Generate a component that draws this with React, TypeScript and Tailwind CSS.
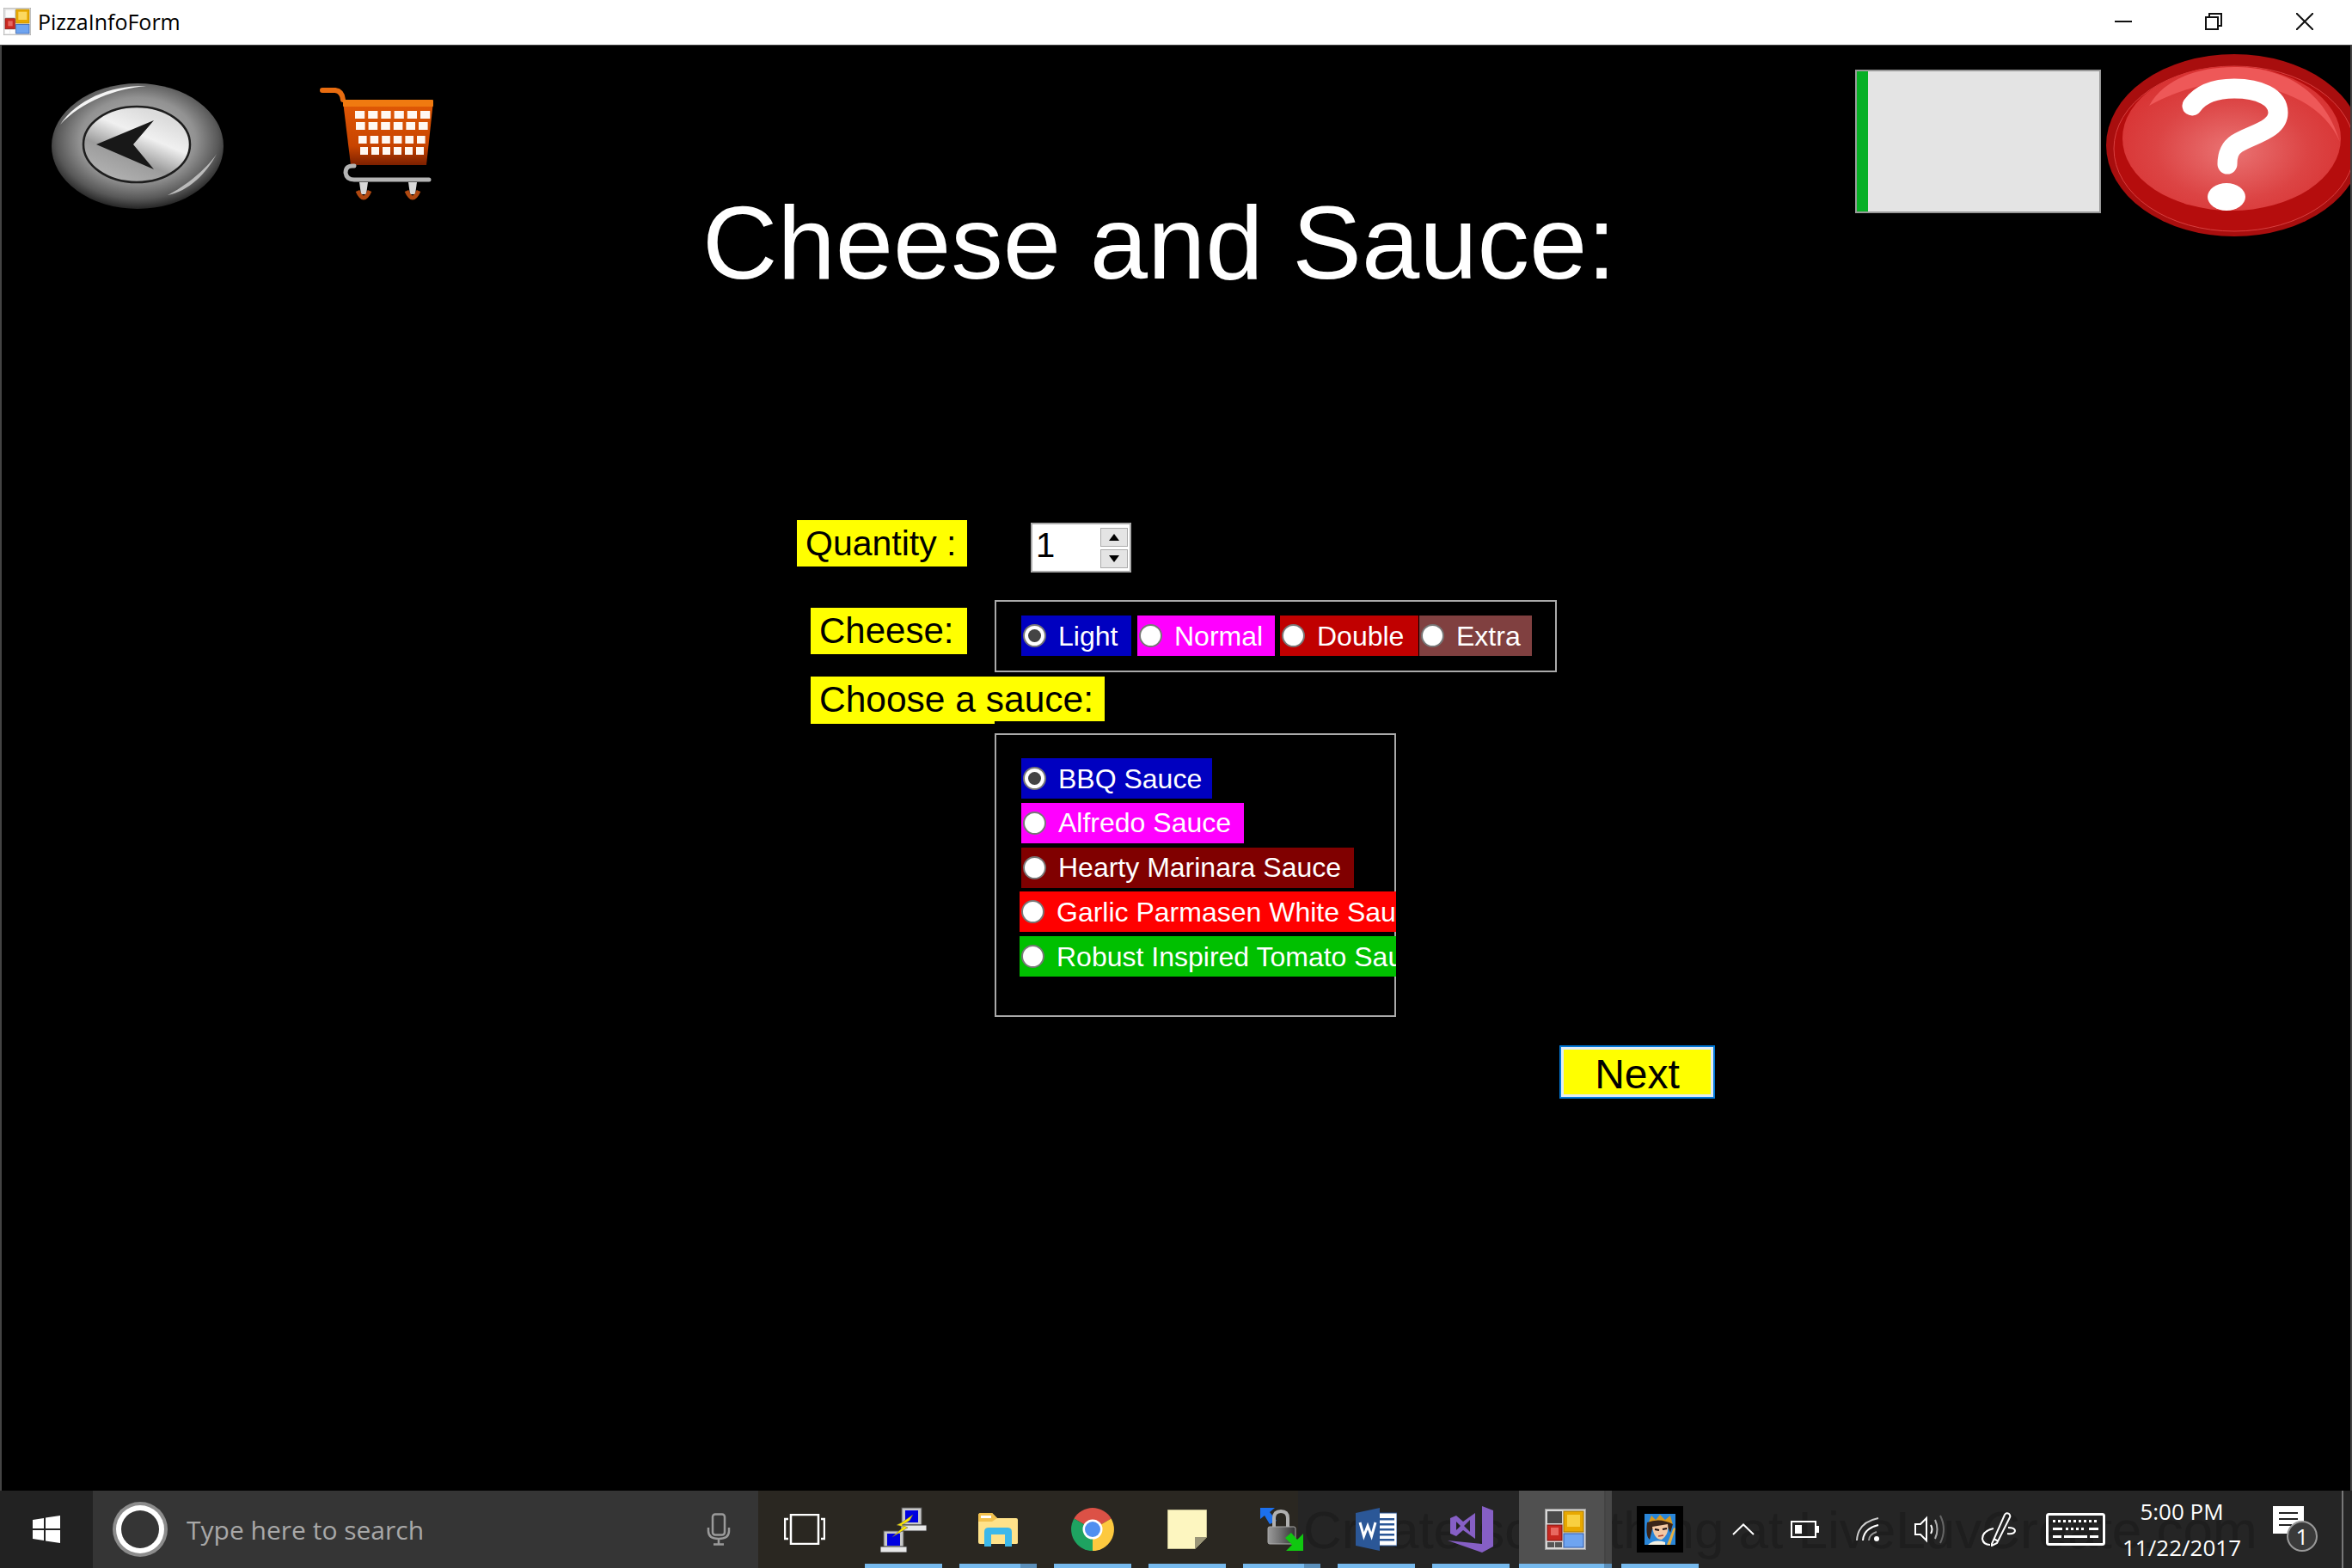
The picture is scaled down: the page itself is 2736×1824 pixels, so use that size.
import type { ReactNode } from 'react'
import { clsx } from 'clsx'

const SAUCES = [
  { label: 'BBQ Sauce', bg: 'bg-[#0000c0]', width: 'w-[222px]', checked: true },
  { label: 'Alfredo Sauce', bg: 'bg-[#ff00ff]', width: 'w-[259px]' },
  { label: 'Hearty Marinara Sauce', bg: 'bg-[#800000]', width: 'w-[387px]' },
  { label: 'Garlic Parmasen White Sauce', bg: 'bg-[#ff0000]', width: 'w-[438px] -ml-[2px] -mr-[2px]' },
  { label: 'Robust Inspired Tomato Sauce', bg: 'bg-[#00c000]', width: 'w-[438px] -ml-[2px] -mr-[2px]' },
]

const CHEESES = [
  { label: 'Light', bg: 'bg-[#0000c0]', width: 'w-[128px]', checked: true },
  { label: 'Normal', bg: 'bg-[#ff00ff]', width: 'w-[160px] ml-[7px]' },
  { label: 'Double', bg: 'bg-[#c00000]', width: 'w-[161px] ml-[6px]' },
  { label: 'Extra', bg: 'bg-[#804040]', width: 'w-[131px] ml-[1px]' },
]

function Radio({ label, bg, width, checked }: { label: string; bg: string; width: string; checked?: boolean }) {
  return (
    <div className={clsx('flex h-[47px] shrink-0 items-center overflow-hidden whitespace-nowrap pl-[2px] text-[32px] leading-none text-white', bg, width)}>
      <span className="flex h-[27px] w-[27px] shrink-0 items-center justify-center rounded-full border-2 border-[#777] bg-white">
        {checked && <span className="h-[15px] w-[15px] rounded-full bg-[#444]" />}
      </span>
      <span className="ml-[14px]">{label}</span>
    </div>
  )
}

function AppIcon({ size = 48 }: { size?: number }) {
  return (
    <svg width={size} height={size} viewBox="0 0 48 48">
      <rect x="0.5" y="0.5" width="47" height="47" fill="#d8d8d8" stroke="#999" />
      <rect x="3" y="3" width="17" height="14" fill="#4a4a4a" />
      <rect x="22" y="3" width="23" height="24" fill="#e8a800" stroke="#a87800" />
      <rect x="26" y="7" width="15" height="14" fill="#f8d040" />
      <rect x="3" y="19" width="17" height="18" fill="#c82820" stroke="#801410" />
      <rect x="7" y="22" width="9" height="9" fill="#e86860" />
      <rect x="22" y="29" width="23" height="16" fill="#6ea4f0" stroke="#2c58a8" />
      <rect x="3" y="39" width="8" height="6" fill="#555" />
      <rect x="12" y="39" width="8" height="6" fill="#555" />
    </svg>
  )
}

function TitleAppIcon() {
  return (
    <svg width="32" height="32" viewBox="0 0 48 48">
      <rect x="0.5" y="0.5" width="47" height="47" fill="#e8e8e8" stroke="#aaa" />
      <rect x="3" y="3" width="17" height="14" fill="#fafafa" stroke="#ccc" />
      <rect x="22" y="3" width="23" height="24" fill="#e8a800" stroke="#b88800" />
      <rect x="26" y="7" width="15" height="14" fill="#fbd860" />
      <rect x="3" y="19" width="17" height="18" fill="#c82820" stroke="#801410" />
      <rect x="8" y="23" width="8" height="9" fill="#e86860" />
      <rect x="22" y="29" width="23" height="16" fill="#6ea4f0" stroke="#2c58a8" />
      <rect x="3" y="39" width="8" height="6" fill="#fff" />
      <rect x="12" y="39" width="8" height="6" fill="#fff" />
    </svg>
  )
}

function BackButton() {
  return (
    <svg width="200" height="146" viewBox="0 0 200 146" className="block">
      <defs>
        <radialGradient id="backOuter" cx="50%" cy="45%" r="56%">
          <stop offset="0%" stopColor="#c0c0c0" />
          <stop offset="60%" stopColor="#929292" />
          <stop offset="84%" stopColor="#585858" />
          <stop offset="100%" stopColor="#1e1e1e" />
        </radialGradient>
        <linearGradient id="backInner" x1="0.75" y1="0.15" x2="0.25" y2="1">
          <stop offset="0%" stopColor="#dcdcdc" />
          <stop offset="30%" stopColor="#f0f0f0" />
          <stop offset="62%" stopColor="#9c9c9c" />
          <stop offset="100%" stopColor="#b4b4b4" />
        </linearGradient>
      </defs>
      <ellipse cx="100" cy="73" rx="100" ry="73" fill="url(#backOuter)" />
      <path d="M10 48 C30 18 70 2 110 3 C75 6 35 21 10 48Z" fill="#f4f4f4" />
      <path d="M135 130 C155 120 180 100 192 82 C180 105 160 125 135 130Z" fill="#bbb" />
      <ellipse cx="99" cy="71" rx="62" ry="44" fill="url(#backInner)" stroke="#1e1e1e" strokeWidth="2.5" />
      <polygon points="52,71 119,43 95,71 119,100" fill="#181818" />
    </svg>
  )
}

function CartIcon() {
  const rows = [
    { y: 29, x0: 41, step: 15.2 },
    { y: 42, x0: 42, step: 14.6 },
    { y: 58, x0: 45, step: 13.6 },
    { y: 71, x0: 47, step: 13 },
  ]
  return (
    <svg width="133" height="135" viewBox="0 0 133 135" className="block">
      <defs>
        <linearGradient id="cartBody" x1="0" y1="0" x2="0" y2="1">
          <stop offset="0%" stopColor="#e25a06" />
          <stop offset="70%" stopColor="#c84400" />
          <stop offset="100%" stopColor="#7c2000" />
        </linearGradient>
      </defs>
      <path d="M3 5 H18 Q26 6 27 16" fill="none" stroke="#e86c10" strokeWidth="6" strokeLinecap="round" />
      <polygon points="27,18 132,18 124,92 36,92" fill="url(#cartBody)" />
      <rect x="27" y="16" width="105" height="8" rx="1" fill="#f07a10" />
      {rows.map((row) =>
        [0, 1, 2, 3, 4, 5].map((i) => (
          <rect key={`${row.y}-${i}`} x={row.x0 + i * row.step} y={row.y} width={row.step - 4} height="9" fill="#fff8f2" />
        )),
      )}
      <path d="M40 93 Q30 92 30 101 Q31 109 40 109 H127" fill="none" stroke="#b4b4b4" strokeWidth="5" strokeLinecap="round" />
      <path d="M46 112 H56 L54 126 H48Z" fill="#d8d8d8" />
      <path d="M103 112 H113 L111 126 H105Z" fill="#d8d8d8" />
      <path d="M44 122 Q51 138 58 122" fill="none" stroke="#b04810" strokeWidth="5" />
      <path d="M101 122 Q108 138 115 122" fill="none" stroke="#b04810" strokeWidth="5" />
    </svg>
  )
}

function HelpButton() {
  return (
    <svg width="284" height="212" viewBox="0 0 284 212" className="block shrink-0">
      <defs>
        <radialGradient id="helpBody" cx="50%" cy="58%" r="58%">
          <stop offset="0%" stopColor="#ea7474" />
          <stop offset="60%" stopColor="#dc4444" />
          <stop offset="100%" stopColor="#d83232" />
        </radialGradient>
      </defs>
      <ellipse cx="149" cy="106" rx="149" ry="106" fill="#a80e0e" />
      <ellipse cx="149" cy="110" rx="140" ry="96" fill="#b50d0d" stroke="#d84040" strokeWidth="1" />
      <ellipse cx="146" cy="98" rx="127" ry="84" fill="url(#helpBody)" />
      <path d="M50 60 C68 28 108 15 149 15 C200 15 252 36 272 102 C255 62 210 38 150 34 C110 32 75 46 50 60Z" fill="#ee5858" />
      <path d="M100 60 C110 46 126 40 149 40 C178 40 200 50 200 68 C200 88 170 93 152 104 C143 110 141 118 141 128" fill="none" stroke="#fff" strokeWidth="23" strokeLinecap="round" />
      <ellipse cx="140" cy="166" rx="22" ry="16" fill="#fff" />
    </svg>
  )
}

function PuttyIcon() {
  return (
    <svg width="54" height="54" viewBox="0 0 54 54">
      <rect x="25" y="2" width="23" height="20" fill="#c8c8c8" stroke="#555" />
      <rect x="29" y="5" width="15" height="14" fill="#0000e0" />
      <rect x="24" y="22" width="30" height="7" fill="#e8e8e8" stroke="#333" />
      <rect x="4" y="29" width="23" height="20" fill="#c8c8c8" stroke="#555" />
      <rect x="8" y="32" width="15" height="14" fill="#0000e0" />
      <rect x="0" y="47" width="31" height="7" fill="#e8e8e8" stroke="#333" />
      <polygon points="38,10 25,19 19,22 27,24 14,36 32,25 25,22 34,17" fill="#ffe800" stroke="#555" strokeWidth="0.5" />
    </svg>
  )
}

function FolderIcon() {
  return (
    <svg width="48" height="40" viewBox="0 0 48 40">
      <path d="M1 4 Q1 1 4 1 H17 L23 7 H45 Q47 7 47 9 V36 Q47 37 45 37 H3 Q1 37 1 35Z" fill="#ffe28a" />
      <path d="M1 4 Q1 1 4 1 H17 L23 7 L17 11 H1Z" fill="#f2c14e" />
      <rect x="4" y="4" width="12" height="3" fill="#fff" />
      <path d="M8 40 V23 Q8 18 13 18 H35 Q40 18 40 23 V40 H32 V26 H16 V40Z" fill="#3cb8ea" />
    </svg>
  )
}

function ChromeIcon() {
  return (
    <svg width="50" height="50" viewBox="0 0 50 50">
      <path d="M25 25 L3.4 12.5 A25 25 0 0 1 46.6 12.5Z" fill="#dc5146" />
      <path d="M25 25 L46.6 12.5 A25 25 0 0 1 25 50Z" fill="#fdc93f" />
      <path d="M25 25 L25 50 A25 25 0 0 1 3.4 12.5Z" fill="#1ea361" />
      <circle cx="25" cy="25" r="11.5" fill="#fff" />
      <circle cx="25" cy="25" r="9" fill="#4f8ff0" />
    </svg>
  )
}

function StickyIcon() {
  return (
    <svg width="46" height="46" viewBox="0 0 46 46">
      <path d="M0 0 H46 V32 L32 46 H0Z" fill="#fdf6c0" stroke="#8f8a68" strokeWidth="1" />
      <path d="M46 32 H32 V46Z" fill="#9a9578" />
    </svg>
  )
}

function LockIcon() {
  return (
    <svg width="52" height="52" viewBox="0 0 52 52">
      <defs>
        <linearGradient id="lockBody" x1="0" y1="0" x2="1" y2="0">
          <stop offset="0%" stopColor="#9a9a9a" />
          <stop offset="50%" stopColor="#6a6a6a" />
          <stop offset="100%" stopColor="#333" />
        </linearGradient>
      </defs>
      <polygon points="1,1 18,1 12,6 20,16 12,20 6,10 1,14" fill="#1c70ee" />
      <path d="M17 26 V13 Q17 5 25 5 Q33 5 33 13 V26" fill="none" stroke="#b0b0b0" strokeWidth="4" />
      <rect x="10" y="23" width="32" height="20" rx="2" fill="url(#lockBody)" stroke="#aaa" />
      <polygon points="51,31 51,51 31,51 38,44 30,36 37,30 44,38" fill="#10c810" />
    </svg>
  )
}

function WordIcon() {
  return (
    <svg width="48" height="50" viewBox="0 0 48 50">
      <rect x="24" y="6" width="24" height="38" fill="#fff" stroke="#2b5797" />
      <rect x="28" y="12" width="17" height="2.5" fill="#2b5797" />
      <rect x="28" y="18" width="17" height="2.5" fill="#2b5797" />
      <rect x="28" y="24" width="17" height="2.5" fill="#2b5797" />
      <rect x="28" y="30" width="17" height="2.5" fill="#2b5797" />
      <rect x="28" y="36" width="17" height="2.5" fill="#2b5797" />
      <polygon points="0,6 28,0 28,50 0,44" fill="#2b5797" />
      <path d="M5 17 L9.5 33 L14 21 L18.5 33 L23 17" fill="none" stroke="#fff" strokeWidth="3" />
    </svg>
  )
}

function VisualStudioIcon() {
  return (
    <svg width="54" height="54" viewBox="0 0 54 54">
      <path d="M40 0 L53 5 V47 L40 54 L0 40 L40 44Z" fill="#865fc5" />
      <path d="M3 14 L10 11 L18 18 L32 8 V38 L18 28 L10 35 L3 32Z M10 18 V28 L15 23Z M26 16 L19 23 L26 30Z" fill="#865fc5" fillRule="evenodd" />
    </svg>
  )
}

function Portrait() {
  return (
    <div className="flex h-[54px] w-[54px] items-center justify-center bg-black">
      <svg width="36" height="36" viewBox="0 0 36 36">
        <rect width="36" height="36" fill="#2a86d8" />
        <path d="M4 12 L8 2 L13 7 L18 1 L24 7 L30 2 L33 13Z" fill="#d99a20" />
        <path d="M3 10 Q1 26 6 30 L9 18 L26 13 L30 22 L33 12 Q18 4 3 10Z" fill="#3a2418" />
        <path d="M9 15 L27 12 Q29 24 20 30 Q11 30 9 15Z" fill="#f3c8a4" />
        <path d="M12 18 L17 19 M21 18 L26 17" stroke="#201010" strokeWidth="2" />
        <path d="M16 26 L22 25" stroke="#b04030" strokeWidth="1.5" />
        <path d="M26 36 L34 16 L36 17 L30 36Z" fill="#e8b040" />
        <path d="M4 36 Q12 29 24 33 V36Z" fill="#f4f0e0" />
      </svg>
    </div>
  )
}

const TASK_SLOTS: { id: string; icon: ReactNode; stacked?: boolean }[] = [
  { id: 'putty', icon: <PuttyIcon /> },
  { id: 'explorer', icon: <FolderIcon />, stacked: true },
  { id: 'chrome', icon: <ChromeIcon /> },
  { id: 'sticky', icon: <StickyIcon /> },
  { id: 'vpn', icon: <LockIcon />, stacked: true },
  { id: 'word', icon: <WordIcon /> },
  { id: 'vs', icon: <VisualStudioIcon /> },
]

function TaskSlot({ icon, stacked }: { icon: ReactNode; stacked?: boolean }) {
  return (
    <div className="relative flex h-full w-[110px] shrink-0 items-center justify-center">
      {icon}
      <span className="absolute bottom-0 left-[10px] h-[5px] w-[90px] bg-[#76b9ed]" />
      {stacked && <span className="absolute bottom-0 left-[81px] h-[5px] w-[19px] bg-[#5b8fba]" />}
    </div>
  )
}

function Taskbar() {
  return (
    <div className="relative flex h-[90px] shrink-0 overflow-hidden bg-[#252525] font-['Open_Sans',sans-serif]">
      <div className="flex w-[108px] shrink-0 items-center justify-center bg-[#222]">
        <svg width="32" height="32" viewBox="0 0 32 32" fill="#fff">
          <polygon points="0,5 13,3 13,15 0,15" />
          <polygon points="15,2.5 32,0 32,15 15,15" />
          <polygon points="0,17 13,17 13,29 0,27" />
          <polygon points="15,17 32,17 32,32 15,29.5" />
        </svg>
      </div>
      <div className="flex w-[774px] shrink-0 items-center bg-[#353535] pl-[23px]">
        <span className="flex h-[64px] w-[64px] shrink-0 items-center justify-center rounded-full bg-[#8c8c8c]">
          <span className="flex h-[56px] w-[56px] items-center justify-center rounded-full bg-white">
            <span className="h-[44px] w-[44px] rounded-full bg-[#353535]" />
          </span>
        </span>
        <span className="ml-[22px] text-[30px] text-[#a8a8a8]">Type here to search</span>
        <svg width="28" height="38" viewBox="0 0 28 38" fill="none" stroke="#9a9a9a" strokeWidth="2.5" className="ml-auto mr-[32px]">
          <rect x="7" y="1.5" width="14" height="24" rx="3" />
          <path d="M2 17 V21 Q2 30 14 30 Q26 30 26 21 V17 M14 30 V36 M8 36.5 H20" />
        </svg>
      </div>
      <div className="flex min-w-0 flex-1 bg-[linear-gradient(90deg,#2a2721_628px,#252525_628px)]">
        <div className="flex w-[114px] shrink-0 items-center justify-center pr-[6px]">
          <svg width="48" height="36" viewBox="0 0 48 36" fill="none" stroke="#fff" strokeWidth="2.5">
            <rect x="8" y="1" width="32" height="34" />
            <path d="M5 6 H1 V29 H5 M43 6 H47 V29 H43" />
          </svg>
        </div>
        {TASK_SLOTS.map((slot) => (
          <div key={slot.id} className="relative z-10">
            <TaskSlot icon={slot.icon} stacked={slot.stacked} />
          </div>
        ))}
        <div className="relative z-10 ml-px flex h-full w-[108px] shrink-0 items-center justify-center bg-[#505050]">
          <AppIcon />
          <span className="absolute inset-y-0 right-0 w-[9px] border-l-2 border-[#444] bg-[#484848]" />
          <span className="absolute bottom-0 left-0 h-[5px] w-[99px] bg-[#76b9ed]" />
          <span className="absolute bottom-0 right-0 h-[5px] w-[9px] bg-[#5b8fba]" />
        </div>
        <div className="relative z-10 ml-px">
          <TaskSlot icon={<Portrait />} />
        </div>
        <div className="relative z-10 ml-[6px] flex h-full items-center">
          <div className="flex w-[72px] justify-center">
            <svg width="26" height="14" viewBox="0 0 26 14" fill="none" stroke="#fff" strokeWidth="2">
              <path d="M1 13 L13 1.5 L25 13" />
            </svg>
          </div>
          <div className="flex w-[72px] justify-center">
            <svg width="34" height="20" viewBox="0 0 34 20">
              <rect x="1" y="1" width="28" height="18" fill="none" stroke="#fff" strokeWidth="2" />
              <rect x="5" y="5" width="8" height="10" fill="#fff" />
              <rect x="30" y="6" width="3" height="8" fill="#fff" />
            </svg>
          </div>
          <div className="flex w-[73px] justify-center">
            <svg width="28" height="28" viewBox="0 0 28 28" fill="none" stroke="#fff" strokeWidth="2">
              <path d="M1 27 Q2 6 26 1" stroke="#ccc" />
              <path d="M8 27 Q9 13 26 9" />
              <path d="M15 27 Q15 20 24 17" stroke="#999" />
              <circle cx="24" cy="25" r="3" fill="#fff" stroke="none" />
            </svg>
          </div>
          <div className="flex w-[72px] justify-center">
            <svg width="36" height="34" viewBox="0 0 36 34" fill="none" stroke="#fff" strokeWidth="2">
              <path d="M1 11 H7 L14 4 V30 L7 23 H1Z" />
              <path d="M19 12 Q22 17 19 22" />
              <path d="M24 6 Q29 17 24 28" stroke="#aaa" />
              <path d="M30 1 Q38 17 30 33" stroke="#666" />
            </svg>
          </div>
          <div className="flex w-[88px] justify-center">
            <svg width="40" height="40" viewBox="0 0 40 40" fill="none" stroke="#fff" strokeWidth="2">
              <path d="M12 37 L27 3 Q29 0 32 2 Q34 4 33 6 L18 36 L12 39Z M14 31 L20 34" />
              <path d="M31 18 Q39 18 39 22 Q38 26 30 25 M14 19 Q1 22 1 31 Q2 38 10 38" />
            </svg>
          </div>
          <div className="flex w-[90px] justify-center">
            <svg width="69" height="38" viewBox="0 0 69 38" fill="#fff">
              <rect x="1.5" y="1.5" width="66" height="35" rx="2" fill="none" stroke="#fff" strokeWidth="3" />
              {[0, 1, 2, 3, 4, 5, 6, 7, 8].map((i) => (
                <rect key={i} x={8 + i * 6} y="8" width="3" height="3" />
              ))}
              <rect x="8" y="17" width="11" height="3" />
              {[0, 1, 2, 3].map((i) => (
                <rect key={i} x={23 + i * 6} y="17" width="3" height="3" />
              ))}
              <rect x="50" y="17" width="11" height="3" />
              <rect x="8" y="26" width="10" height="3" />
              <rect x="21" y="26" width="27" height="3" />
              <rect x="51" y="26" width="10" height="3" />
            </svg>
          </div>
          <div className="flex w-[158px] flex-col items-center text-[26px] leading-[42px] text-white">
            <span>5:00 PM</span>
            <span>11/22/2017</span>
          </div>
          <div className="flex h-[90px] w-[109px] items-center border-r-2 border-[#777] pl-[27px]">
            <div className="relative h-[54px] w-[54px]">
              <svg width="36" height="32" viewBox="0 0 36 32">
                <path d="M0 0 H36 V32 H17 L13 32 H0Z" fill="#fff" />
                <path d="M7 8 H29 M7 15 H29 M7 22 H22" stroke="#222" strokeWidth="2" />
              </svg>
              <span className="absolute left-[16px] top-[17px] flex h-[36px] w-[36px] items-center justify-center rounded-full border-2 border-[#999] bg-[#3a3a3a] text-[26px] leading-none text-white">
                1
              </span>
            </div>
          </div>
        </div>
      </div>
      {/* watermark burnt into the capture, sits under the taskbar icons */}
      <span className="pointer-events-none absolute left-[1516px] top-[6px] whitespace-nowrap font-['Liberation_Sans',sans-serif] text-[62px] leading-[80px] text-[#1e1e1e]">
        Create something at LiveLuvCreate.com
      </span>
    </div>
  )
}

export default function App() {
  return (
    <div className="flex h-[1824px] w-[2736px] flex-col overflow-hidden bg-black font-['Liberation_Sans',sans-serif]">
      <div className="flex h-[53px] shrink-0 items-center border-b border-[#444] bg-white pb-[2px] pl-[4px]">
        <TitleAppIcon />
        <span className="ml-[8px] mt-[2px] font-['Open_Sans',sans-serif] text-[25px] text-black">PizzaInfoForm</span>
        <div className="ml-auto flex items-center">
          <svg width="20" height="20" viewBox="0 0 20 20" className="mr-[85px]" stroke="#111" strokeWidth="2">
            <path d="M0 10 H20" />
          </svg>
          <svg width="20" height="20" viewBox="0 0 20 20" className="mr-[86px]" fill="none" stroke="#111" strokeWidth="2">
            <rect x="1" y="5" width="14" height="14" />
            <path d="M5 5 V1 H19 V15 H15" />
          </svg>
          <svg width="20" height="20" viewBox="0 0 20 20" className="mr-[45px]" stroke="#111" strokeWidth="2">
            <path d="M0 0 L20 20 M20 0 L0 20" />
          </svg>
        </div>
      </div>

      <div className="min-h-0 flex-1 overflow-hidden border-x-2 border-[#444]">
        <div className="flex items-start">
          <div className="ml-[58px] mt-[44px]">
            <BackButton />
          </div>
          <div className="ml-[112px] mt-[47px]">
            <CartIcon />
          </div>
          <h1 className="ml-[312px] mt-[169px] whitespace-nowrap text-[121px] font-normal leading-none text-white">
            Cheese and Sauce:
          </h1>
          <div className="ml-auto mt-[28px] h-[167px] w-[286px] border-2 border-[#999] bg-[#e4e4e4]">
            <div className="h-full w-[13px] bg-[#06b025]" />
          </div>
          <div className="ml-[6px] mt-[10px]">
            <HelpButton />
          </div>
        </div>

        <div className="ml-[925px] mt-[262px] flex items-start">
          <div className="flex h-[54px] w-[198px] items-center bg-[#ffff00] pl-[10px] text-[41px] leading-none text-black">
            Quantity :
          </div>
          <div className="ml-[74px] mt-[3px] flex h-[58px] w-[117px] items-center border-2 border-[#aaa] bg-white pl-[4px]">
            <span className="pb-[7px] text-[40px] leading-none text-black">1</span>
            <div className="ml-auto mr-[2px] flex flex-col gap-[3px]">
              <span className="flex h-[22px] w-[32px] items-center justify-center border border-[#ababab] bg-[#e4e4e4]">
                <span className="h-0 w-0 border-x-[6px] border-b-[8px] border-x-transparent border-b-black" />
              </span>
              <span className="flex h-[22px] w-[32px] items-center justify-center border border-[#ababab] bg-[#e4e4e4]">
                <span className="h-0 w-0 border-x-[6px] border-t-[8px] border-x-transparent border-t-black" />
              </span>
            </div>
          </div>
        </div>

        <div className="ml-[941px] mt-[32px] flex items-start">
          <div className="mt-[9px] flex h-[54px] w-[182px] items-center bg-[#ffff00] pl-[10px] text-[42px] leading-none text-black">
            Cheese:
          </div>
          <div className="ml-[32px] flex h-[84px] w-[654px] items-start border-2 border-[#aaa] pl-[29px] pt-[16px]">
            {CHEESES.map((cheese) => (
              <Radio key={cheese.label} {...cheese} />
            ))}
          </div>
        </div>

        <div className="relative ml-[941px] mt-[5px] flex h-[52px] w-[342px] items-center whitespace-nowrap bg-[#ffff00] pl-[10px] pt-[3px] text-[42.5px] leading-none text-black after:absolute after:left-0 after:top-full after:h-[3px] after:w-[214px] after:bg-[#ffff00]">
          Choose a sauce:
        </div>

        <div className="ml-[1155px] mt-[14px] flex h-[330px] w-[467px] flex-col gap-[4.75px] border-2 border-[#aaa] pl-[29px] pt-[27px]">
          {SAUCES.map((sauce) => (
            <Radio key={sauce.label} {...sauce} />
          ))}
        </div>

        <div className="ml-[1812px] mt-[33px] flex h-[62px] w-[181px] items-center justify-center border-2 border-[#0078d7] bg-[#ffff00] pt-[6px] text-[48px] leading-none text-black shadow-[inset_0_0_0_3px_#e1ecf5]">
          Next
        </div>
      </div>

      <Taskbar />
    </div>
  )
}
